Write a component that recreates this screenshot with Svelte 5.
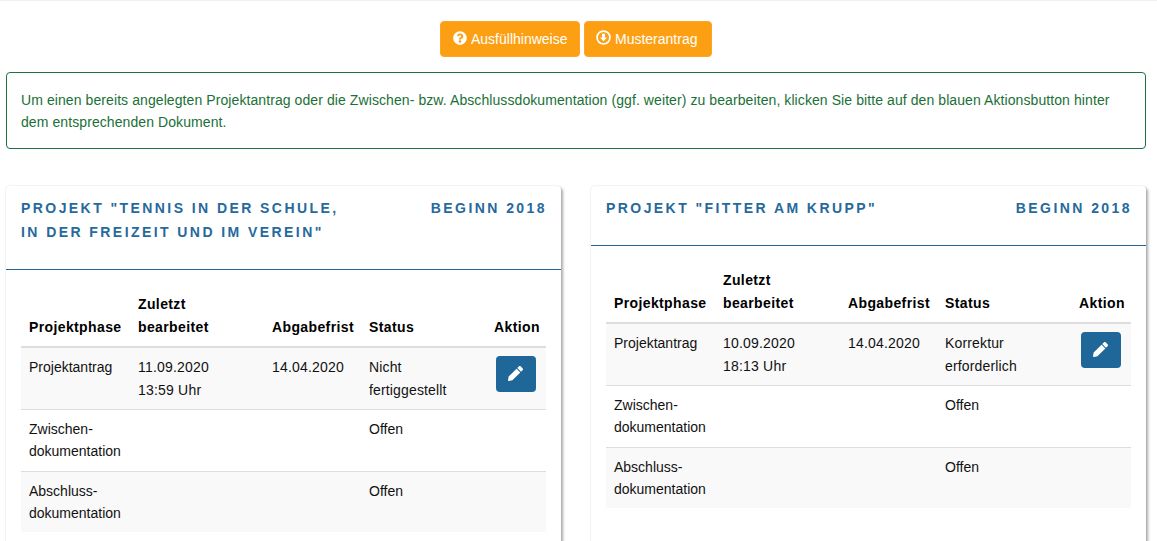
<script>
  const projects = [
    { title: ['Projekt "Tennis in der Schule,', 'in der Freizeit und im Verein"'], edited: ['11.09.2020', '13:59 Uhr'], status: ['Nicht', 'fertiggestellt'], layout: 'wide-date' },
    { title: ['Projekt "Fitter am Krupp"'], edited: ['10.09.2020', '18:13 Uhr'], status: ['Korrektur', 'erforderlich'], layout: 'wide-status' }
  ];
</script>

<div class="page">
  <div class="actions">
    <button class="btn">
      <svg viewBox="0 0 512 512" class="ico"><path fill="currentColor" d="M504 256c0 137-111 248-248 248S8 393 8 256 119 8 256 8s248 111 248 248zM262.700 90c-54.500 0-89.300 23-116.500 63.800-3.500 5.300-2.400 12.400 2.700 16.300l34.700 26.300c5.200 3.900 12.600 3 16.700-2.100 17.900-22.700 30.100-35.800 57.300-35.800 20.400 0 45.700 13.100 45.700 33 0 15-12.400 22.700-32.600 34-23.600 13.200-54.800 29.700-54.800 70.900V300c0 6.600 5.400 12 12 12h56c6.600 0 12-5.400 12-12v-1.300c0-28.600 83.500-29.800 83.500-107.100C379.900 133.300 319.500 90 262.700 90zM256 339c-25.500 0-46.200 20.700-46.200 46.200 0 25.500 20.700 46.200 46.200 46.200s46.200-20.700 46.200-46.200C302.200 359.700 281.500 339 256 339z"/></svg>
      Ausfüllhinweise
    </button>
    <button class="btn second">
      <svg viewBox="0 0 24 24" class="ico"><circle cx="12" cy="12" r="10.300" fill="none" stroke="currentColor" stroke-width="2.800"/><path fill="currentColor" d="M9.600 6h4.800v5.800h3.300L12 17.800 6.300 11.800h3.300z"/></svg>
      Musterantrag
    </button>
  </div>

  <div class="alert">
    Um einen bereits angelegten Projektantrag oder die Zwischen- bzw. Abschlussdokumentation (ggf. weiter) zu bearbeiten, klicken Sie bitte auf den blauen Aktionsbutton hinter dem entsprechenden Dokument.
  </div>

  <div class="cards">
    {#each projects as p}
      <section class="card">
        <header class="card-head">
          <h2>{#each p.title as line, i}{#if i}<br />{/if}{line}{/each}</h2>
          <span class="year">Beginn 2018</span>
        </header>
        <div class="card-body">
          <table class={p.layout}>
            <thead>
              <tr>
                <th class="c1">Projektphase</th>
                <th class="c2">Zuletzt<br />bearbeitet</th>
                <th class="c3">Abgabefrist</th>
                <th class="c4">Status</th>
                <th class="c5">Aktion</th>
              </tr>
            </thead>
            <tbody>
              <tr>
                <td>Projektantrag</td>
                <td class="date">{p.edited[0]}<br />{p.edited[1]}</td>
                <td class="date">14.04.2020</td>
                <td class="status">{p.status[0]}<br />{p.status[1]}</td>
                <td class="act">
                  <button class="edit" aria-label="Bearbeiten">
                    <svg viewBox="0 0 512 512" class="pen"><path fill="currentColor" d="M497.900 142.100l-46.100 46.100c-4.700 4.700-12.300 4.700-17 0l-111-111c-4.700-4.700-4.700-12.300 0-17l46.100-46.100c18.700-18.700 49.100-18.700 67.900 0l60.100 60.100c18.800 18.700 18.800 49.100 0 67.900zM284.200 99.800L21.600 362.400.4 483.900c-2.900 16.400 11.400 30.600 27.800 27.800l121.500-21.300 262.600-262.600c4.700-4.700 4.700-12.300 0-17l-111-111c-4.800-4.700-12.400-4.700-17.100 0z"/></svg>
                  </button>
                </td>
              </tr>
              <tr><td>Zwischen-<br />dokumentation</td><td></td><td></td><td>Offen</td><td></td></tr>
              <tr><td>Abschluss-<br />dokumentation</td><td></td><td></td><td>Offen</td><td></td></tr>
            </tbody>
          </table>
        </div>
      </section>
    {/each}
  </div>
</div>

<style>
  :global(body) {
    margin: 0;
    overflow: hidden;
    background: #fff;
    font-family: "Liberation Sans", Arial, sans-serif;
    font-size: 14px;
    line-height: 22.4px;
    color: #212529;
  }
  .page {
    height: 541px;
    overflow: hidden;
    box-sizing: border-box;
    padding: 21px 11px 0 6px;
    box-shadow: inset 0 1px 0 #f2f2f2;
  }
  .actions {
    display: flex;
    justify-content: center;
    gap: 4px;
    margin-bottom: 15px;
  }
  .btn {
    height: 36px;
    padding: 0 12px;
    background: #fd9f12;
    color: #fff;
    border: 1px solid #fda52a;
    border-radius: 4px;
    font: inherit;
    display: flex;
    align-items: center;
    gap: 4px;
    box-sizing: border-box;
    width: 140px;
  }
  .second {
    width: 128px;
    padding-left: 11px;
  }
  .ico {
    width: 14px;
    height: 14px;
    margin-top: -3px;
    flex: none;
  }
  .second .ico {
    width: 15px;
    height: 15px;
    margin-top: -4px;
  }
  .alert {
    box-sizing: border-box;
    height: 77px;
    padding: 16px 14px;
    border: 1px solid #1e7145;
    border-radius: 4px;
    color: #1a7036;
    letter-spacing: 0.085px;
    margin-bottom: 37px;
  }
  .cards {
    display: flex;
    gap: 30px;
  }
  .card {
    flex: 1 1 0;
    min-width: 0;
    height: 400px;
    background: #fff;
    border-radius: 4px;
    box-shadow: 2px 2px 3px rgba(0, 0, 0, 0.32), 0 0 2px rgba(0, 0, 0, 0.14);
  }
  .card-head {
    display: flex;
    justify-content: space-between;
    padding: 10px 15px 25px;
    border-bottom: 1px solid #236a9b;
    color: #26699c;
    font-weight: 700;
    letter-spacing: 2.43px;
    text-transform: uppercase;
    line-height: 24px;
  }
  h2 {
    margin: 0;
    font: inherit;
    letter-spacing: inherit;
  }
  .year {
    white-space: nowrap;
    margin-right: -1px;
  }
  .card-body {
    padding: 15px;
  }
  table {
    width: 525px;
    table-layout: fixed;
    border-collapse: collapse;
    color: #111;
  }
  th,
  td {
    box-sizing: border-box;
  }
  th {
    padding: 7.7px 8px 7.1px;
    line-height: 23px;
    letter-spacing: 0.38px;
    text-align: left;
    vertical-align: bottom;
    color: #000;
    border-bottom: 2px solid #dddddd;
  }
  td {
    padding: 8px;
    vertical-align: top;
    border-bottom: 1px solid #dddddd;
    height: 45px;
  }
  .date {
    letter-spacing: 0.2px;
  }
  .status {
    letter-spacing: 0.15px;
  }
  tbody tr:first-child td {
    line-height: 23px;
    padding-bottom: 7px;
  }
  tbody tr:nth-child(odd) {
    background: #f9f9f9;
  }
  tbody tr:last-child td {
    border-bottom: 0;
  }
  .c1 { width: 109px; }
  .c3 { width: 97px; }
  .c5 { width: 60px; }
  .wide-date .c2 { width: 134px; }
  .wide-date .c4 { width: 125px; }
  .wide-status .c2 { width: 125px; }
  .wide-status .c4 { width: 134px; }
  .act {
    padding: 8px 10px;
  }
  .edit {
    width: 40px;
    height: 36px;
    padding: 0 1px 0 0;
    background: #1f6699;
    color: #fff;
    border: 0;
    border-radius: 4px;
    display: flex;
    align-items: center;
    justify-content: center;
  }
  .pen {
    width: 15px;
    height: 15px;
  }
</style>
